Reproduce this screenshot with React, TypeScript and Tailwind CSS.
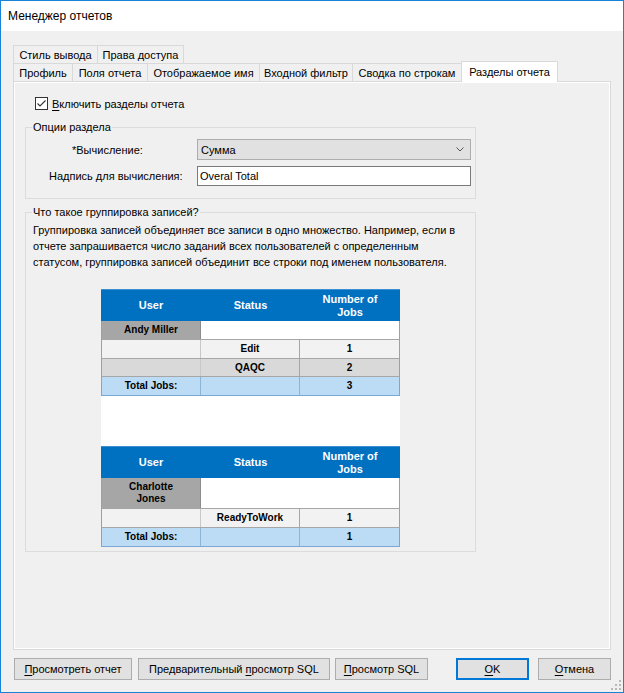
import React from "react";

const U = ({ children }: { children: React.ReactNode }) => (
  <span className="underline underline-offset-[2px] decoration-[1px]">{children}</span>
);

function Tab({ w, children }: { w: string; children: React.ReactNode }) {
  return (
    <div
      className={`${w} -ml-[1px] first:ml-0 h-[18px] border-t border-l border-r border-[#d9d9d9] bg-[#f0f0f0] flex items-center justify-center whitespace-nowrap`}
    >
      <span>{children}</span>
    </div>
  );
}

function Btn({ w, primary, children }: { w: string; primary?: boolean; children: React.ReactNode }) {
  return (
    <div
      className={`${w} h-[22px] flex items-center justify-center bg-[#e1e1e1] whitespace-nowrap ${
        primary ? "border-2 border-[#0078d7]" : "border border-[#adadad]"
      }`}
    >
      <span>{children}</span>
    </div>
  );
}

const hdr = "flex items-center justify-center text-white font-bold text-[11px] leading-[13px] text-center";
const cell = "flex items-center justify-center font-bold text-[10px] leading-[12px] text-center text-black";

function Header() {
  return (
    <div className="flex h-[32px] bg-[#0070c0] border-t border-[#3d8fcf]">
      <div className={`w-[100px] ${hdr}`}>User</div>
      <div className={`w-[99px] ${hdr}`}>Status</div>
      <div className={`w-[100px] ${hdr}`}>
        <span>
          Number of
          <br />
          Jobs
        </span>
      </div>
    </div>
  );
}

function UserRow({ h, children }: { h: string; children: React.ReactNode }) {
  return (
    <div className={`flex ${h} border-x border-b border-x-[#7ba7d4] border-b-[#a6a6a6] bg-white`}>
      <div className={`w-[99px] bg-[#a6a6a6] border-r border-[#8c8c8c] ${cell}`}>
        <span>{children}</span>
      </div>
      <div className="flex-1 bg-white" />
    </div>
  );
}

function DataRow({ h, bg, status, num }: { h: string; bg: string; status: string; num: string }) {
  return (
    <div className={`flex ${h} ${bg} border-x border-b border-x-[#7ba7d4] border-b-[#a6a6a6]`}>
      <div className={`w-[99px] border-r border-[#c8c8c8] ${cell}`} />
      <div className={`w-[99px] border-r border-[#a6a6a6] ${cell}`}>{status}</div>
      <div className={`flex-1 ${cell}`}>{num}</div>
    </div>
  );
}

function TotalRow({ num }: { num: string }) {
  return (
    <div className="flex h-[19px] bg-[#bcdcf5] border-x border-b border-[#7ba7d4]">
      <div className={`w-[99px] border-r border-[#8fb3d6] ${cell}`}>Total Jobs:</div>
      <div className={`w-[99px] border-r border-[#8fb3d6] ${cell}`} />
      <div className={`flex-1 ${cell}`}>{num}</div>
    </div>
  );
}

export default function App() {
  return (
    <div className="relative w-[624px] h-[693px] border border-[#1883d7] bg-[#f0f0f0] flex flex-col font-['Liberation_Sans',Arial,sans-serif] text-[11px] leading-[14px] text-black overflow-hidden">
      {/* title bar */}
      <div className="h-[30px] shrink-0 bg-white flex items-center pl-[7px] text-[12px]">Менеджер отчетов</div>

      <div className="flex-1 flex flex-col px-[12px]">
        {/* tabs row 1 */}
        <div className="mt-[14px] flex h-[18px]">
          <Tab w="w-[85px]">Стиль вывода</Tab>
          <Tab w="w-[87px]">Права доступа</Tab>
        </div>
        {/* tabs row 2 */}
        <div className="flex h-[18px] items-start">
          <Tab w="w-[60px]">Профиль</Tab>
          <Tab w="w-[76px]">Поля отчета</Tab>
          <Tab w="w-[113px]">Отображаемое имя</Tab>
          <Tab w="w-[94px]">Входной фильтр</Tab>
          <Tab w="w-[110px]">Сводка по строкам</Tab>
          <div className="relative z-10 -ml-[1px] -mt-[2px] w-[97px] h-[21px] border-t border-l border-r border-[#d9d9d9] bg-white flex items-center justify-center whitespace-nowrap">
            <span>Разделы отчета</span>
          </div>
        </div>

        {/* panel */}
        <div className="flex-1 border border-[#d9d9d9] shadow-[inset_0_0_0_1px_#ffffff] bg-[#f0f0f0] flex flex-col pl-[1px]">
          {/* checkbox */}
          <div className="mt-[15px] ml-[20px] flex items-center h-[13px]">
            <div className="w-[13px] h-[13px] border border-[#333333] bg-white flex items-center justify-center">
              <svg width="11" height="11" viewBox="0 0 11 11">
                <polyline points="1.5,5.5 4,8 9.5,2.5" fill="none" stroke="#333333" strokeWidth="1.1" />
              </svg>
            </div>
            <span className="ml-[4px] whitespace-nowrap">
              <U>В</U>ключить разделы отчета
            </span>
          </div>

          {/* group 1 */}
          <fieldset className="mt-[10px] ml-[10px] w-[451px] border border-[#dcdcdc] pb-[12px]">
            <legend className="ml-[6px] px-[1px] leading-[14px]">Опции раздела</legend>
            <div className="mt-[5px] flex items-center h-[21px]">
              <div className="w-[171px] pl-[46px] whitespace-nowrap">*Вычисление:</div>
              <div className="w-[274px] h-[21px] bg-[#e1e1e1] border border-[#adadad] flex items-center justify-between pl-[3px] pr-[6px]">
                <span>Сумма</span>
                <svg width="8" height="5" viewBox="0 0 8 5">
                  <polyline points="0.5,0.5 4,4 7.5,0.5" fill="none" stroke="#555555" strokeWidth="1" />
                </svg>
              </div>
            </div>
            <div className="mt-[6px] flex items-center h-[20px]">
              <div className="w-[171px] pl-[23px] whitespace-nowrap">Надпись для вычисления:</div>
              <div className="w-[274px] h-[20px] bg-white border border-[#7a7a7a] flex items-center pl-[2px]">
                Overal Total
              </div>
            </div>
          </fieldset>

          {/* group 2 */}
          <fieldset className="mt-[6px] ml-[10px] w-[451px] border border-[#dcdcdc] pb-[4px]">
            <legend className="ml-[6px] px-[1px] leading-[14px]">Что такое группировка записей?</legend>
            <p className="mt-[3px] pl-[7px] leading-[16px] whitespace-nowrap">
              Группировка записей объединяет все записи в одно множество. Например, если в
              <br />
              отчете запрашивается число заданий всех пользователей с определенным
              <br />
              статусом, группировка записей объединит все строки под именем пользователя.
            </p>
            <div className="mt-[19px] ml-[75px] w-[299px] bg-white font-['Liberation_Sans',Arial,sans-serif]">
              <Header />
              <UserRow h="h-[19px]">Andy Miller</UserRow>
              <DataRow h="h-[19px]" bg="bg-[#f2f2f2]" status="Edit" num="1" />
              <DataRow h="h-[18px]" bg="bg-[#d9d9d9]" status="QAQC" num="2" />
              <TotalRow num="3" />
              <div className="h-[50px] bg-white" />
              <Header />
              <UserRow h="h-[31px]">
                Charlotte
                <br />
                Jones
              </UserRow>
              <DataRow h="h-[19px]" bg="bg-[#f2f2f2]" status="ReadyToWork" num="1" />
              <TotalRow num="1" />
            </div>
          </fieldset>
        </div>

        {/* buttons */}
        <div className="mt-[8px] mb-[12px] h-[22px] flex">
          <div className="ml-[1px]">
            <Btn w="w-[118px]">
              <U>П</U>росмотреть отчет
            </Btn>
          </div>
          <div className="ml-[6px]">
            <Btn w="w-[192px]">
              Предварительный <U>п</U>росмотр SQL
            </Btn>
          </div>
          <div className="ml-[5px]">
            <Btn w="w-[93px]">
              <U>П</U>росмотр SQL
            </Btn>
          </div>
          <div className="ml-[28px]">
            <Btn w="w-[73px]" primary>
              <U>O</U>K
            </Btn>
          </div>
          <div className="ml-[9px]">
            <Btn w="w-[73px]">
              <U>О</U>тмена
            </Btn>
          </div>
        </div>
      </div>

      {/* resize grip */}
      <svg className="absolute right-[1px] bottom-[1px]" width="11" height="11" viewBox="0 0 11 11">
        <rect x="8" y="0" width="2" height="2" fill="#b8b8b8" />
        <rect x="8" y="4" width="2" height="2" fill="#b8b8b8" />
        <rect x="4" y="4" width="2" height="2" fill="#b8b8b8" />
        <rect x="8" y="8" width="2" height="2" fill="#b8b8b8" />
        <rect x="4" y="8" width="2" height="2" fill="#b8b8b8" />
        <rect x="0" y="8" width="2" height="2" fill="#b8b8b8" />
      </svg>
    </div>
  );
}
